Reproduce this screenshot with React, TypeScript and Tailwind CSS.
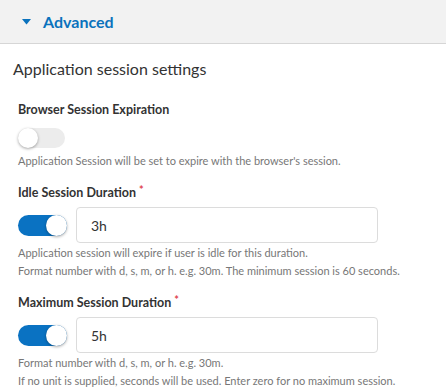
import React from "react";

function Toggle({ on }: { on: boolean }) {
  return (
    <div
      className={
        on
          ? "relative w-[49px] h-[21px] rounded-full bg-[#0a72c2] shrink-0"
          : "relative w-[47px] h-[20px] rounded-full bg-[#ececec] shrink-0"
      }
    >
      <div
        className={
          on
            ? "absolute right-0 top-0 w-[21px] h-[21px] rounded-full bg-white shadow-[0_1px_3px_rgba(0,0,0,0.35)]"
            : "absolute left-0 top-0 w-[20px] h-[20px] rounded-full bg-white shadow-[0_1px_3px_rgba(0,0,0,0.35)]"
        }
      />
    </div>
  );
}

function Label({ text, required, className }: { text: string; required?: boolean; className: string }) {
  return (
    <div className={"text-[12.5px] leading-[20px] font-bold text-[#333333] " + className}>
      {text}
      {required && <span className="text-[#e0454f] text-[11px] align-top ml-[3px] relative top-[-3px]">*</span>}
    </div>
  );
}

function Help({ children, className }: { children: React.ReactNode; className?: string }) {
  return <div className={"text-[11px] leading-[18px] text-[#777777] " + (className || "")}>{children}</div>;
}

function InputRow({ value }: { value: string }) {
  return (
    <div className="flex items-center gap-[9px] mt-[4px]">
      <Toggle on />
      <div className="w-[302px] h-[36px] border border-[#dcdcdc] rounded-[4px] flex items-center pl-[14px] text-[14px] text-[#333333]">
        {value}
      </div>
    </div>
  );
}

export default function App() {
  return (
    <div className="w-[446px] h-[392px] bg-white overflow-hidden font-['Lato',sans-serif]">
      <div className="h-[44px] bg-[#f2f2f2] border-b border-[#d6d6d6] flex items-center pl-[22px]">
        <svg width="9" height="6" viewBox="0 0 9 6" className="mr-[12px] mt-[1px]">
          <path d="M0 0 L9 0 L4.5 5.5 Z" fill="#0a72bd" />
        </svg>
        <span className="text-[16px] font-bold text-[#0a72bd] leading-[20px]">Advanced</span>
      </div>
      <div className="pl-[13px]">
        <div className="mt-[15px] text-[16px] leading-[20px] text-[#333333]">Application session settings</div>
        <div className="pl-[5px]">
          <Label text="Browser Session Expiration" className="mt-[21px]" />
          <div className="mt-[8px]">
            <Toggle on={false} />
          </div>
          <Help className="mt-[4px]">Application Session will be set to expire with the browser's session.</Help>

          <Label text="Idle Session Duration" required className="mt-[13px]" />
          <InputRow value="3h" />
          <Help className="mt-[1px]">Application session will expire if user is idle for this duration.</Help>
          <Help>Format number with d, s, m, or h. e.g. 30m. The minimum session is 60 seconds.</Help>

          <Label text="Maximum Session Duration" required className="mt-[13px]" />
          <InputRow value="5h" />
          <Help className="mt-[1px]">Format number with d, s, m, or h. e.g. 30m.</Help>
          <Help>If no unit is supplied, seconds will be used. Enter zero for no maximum session.</Help>
        </div>
      </div>
    </div>
  );
}
